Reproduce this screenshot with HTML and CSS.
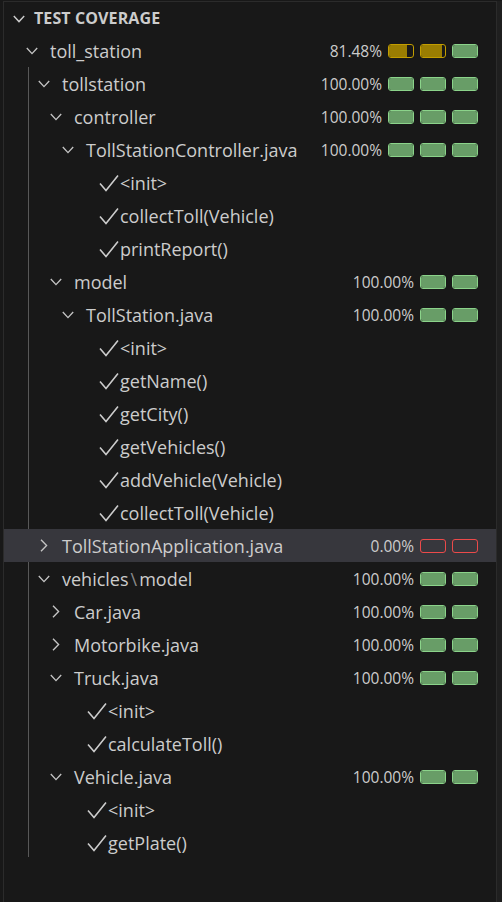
FILE: index.html
```html
<!DOCTYPE html>
<html>
<head>
<meta charset="utf-8">
<link rel="stylesheet" href="styles.css">
</head>
<body>
<div class="frame">
  <div class="panel">
    <div class="header">
      <svg class="hchev" width="12" height="8" viewBox="0 0 12 8"><polyline points="0.8,1 6,6.6 11.2,1" fill="none" stroke="#cccccc" stroke-width="1.4"/></svg>
      <span class="title">TEST COVERAGE</span>
    </div>
    <div class="tree">
      <div class="row d0"><span class="tw"><svg class="cd" width="12" height="8" viewBox="0 0 12 8"><polyline points="0.8,1 6,6.6 11.2,1"/></svg></span><span class="label">toll_station</span><span class="pct">81.48%</span><span class="bars"><span class="bar warn"><span class="fill" style="width:76%"></span></span><span class="bar warn"><span class="fill" style="width:89%"></span></span><span class="bar ok"><span class="fill full"></span></span></span></div>
      <div class="group">
        <div class="row d1"><span class="tw"><svg class="cd" width="12" height="8" viewBox="0 0 12 8"><polyline points="0.8,1 6,6.6 11.2,1"/></svg></span><span class="label">tollstation</span><span class="pct">100.00%</span><span class="bars"><span class="bar ok"><span class="fill full"></span></span><span class="bar ok"><span class="fill full"></span></span><span class="bar ok"><span class="fill full"></span></span></span></div>
        <div class="row d2"><span class="tw"><svg class="cd" width="12" height="8" viewBox="0 0 12 8"><polyline points="0.8,1 6,6.6 11.2,1"/></svg></span><span class="label">controller</span><span class="pct">100.00%</span><span class="bars"><span class="bar ok"><span class="fill full"></span></span><span class="bar ok"><span class="fill full"></span></span><span class="bar ok"><span class="fill full"></span></span></span></div>
        <div class="row d3"><span class="tw"><svg class="cd" width="12" height="8" viewBox="0 0 12 8"><polyline points="0.8,1 6,6.6 11.2,1"/></svg></span><span class="label">TollStationController.java</span><span class="pct">100.00%</span><span class="bars"><span class="bar ok"><span class="fill full"></span></span><span class="bar ok"><span class="fill full"></span></span><span class="bar ok"><span class="fill full"></span></span></span></div>
        <div class="row d4"><span class="tw"></span><span class="ck"><svg width="20" height="18" viewBox="0 0 20 18"><polyline points="1,9.5 7,16.5 19,1.5"/></svg></span><span class="label">&lt;init&gt;</span></div>
        <div class="row d4"><span class="tw"></span><span class="ck"><svg width="20" height="18" viewBox="0 0 20 18"><polyline points="1,9.5 7,16.5 19,1.5"/></svg></span><span class="label">collectToll(Vehicle)</span></div>
        <div class="row d4"><span class="tw"></span><span class="ck"><svg width="20" height="18" viewBox="0 0 20 18"><polyline points="1,9.5 7,16.5 19,1.5"/></svg></span><span class="label">printReport()</span></div>
        <div class="row d2"><span class="tw"><svg class="cd" width="12" height="8" viewBox="0 0 12 8"><polyline points="0.8,1 6,6.6 11.2,1"/></svg></span><span class="label">model</span><span class="pct">100.00%</span><span class="bars"><span class="bar ok"><span class="fill full"></span></span><span class="bar ok"><span class="fill full"></span></span></span></div>
        <div class="row d3"><span class="tw"><svg class="cd" width="12" height="8" viewBox="0 0 12 8"><polyline points="0.8,1 6,6.6 11.2,1"/></svg></span><span class="label">TollStation.java</span><span class="pct">100.00%</span><span class="bars"><span class="bar ok"><span class="fill full"></span></span><span class="bar ok"><span class="fill full"></span></span></span></div>
        <div class="row d4"><span class="tw"></span><span class="ck"><svg width="20" height="18" viewBox="0 0 20 18"><polyline points="1,9.5 7,16.5 19,1.5"/></svg></span><span class="label">&lt;init&gt;</span></div>
        <div class="row d4"><span class="tw"></span><span class="ck"><svg width="20" height="18" viewBox="0 0 20 18"><polyline points="1,9.5 7,16.5 19,1.5"/></svg></span><span class="label">getName()</span></div>
        <div class="row d4"><span class="tw"></span><span class="ck"><svg width="20" height="18" viewBox="0 0 20 18"><polyline points="1,9.5 7,16.5 19,1.5"/></svg></span><span class="label">getCity()</span></div>
        <div class="row d4"><span class="tw"></span><span class="ck"><svg width="20" height="18" viewBox="0 0 20 18"><polyline points="1,9.5 7,16.5 19,1.5"/></svg></span><span class="label">getVehicles()</span></div>
        <div class="row d4"><span class="tw"></span><span class="ck"><svg width="20" height="18" viewBox="0 0 20 18"><polyline points="1,9.5 7,16.5 19,1.5"/></svg></span><span class="label">addVehicle(Vehicle)</span></div>
        <div class="row d4"><span class="tw"></span><span class="ck"><svg width="20" height="18" viewBox="0 0 20 18"><polyline points="1,9.5 7,16.5 19,1.5"/></svg></span><span class="label">collectToll(Vehicle)</span></div>
        <div class="row d1 selected"><span class="tw"><svg class="cr" width="8" height="13" viewBox="0 0 8 13"><polyline points="1,0.8 6.6,6.5 1,12.2"/></svg></span><span class="label">TollStationApplication.java</span><span class="pct">0.00%</span><span class="bars"><span class="bar bad"></span><span class="bar bad"></span></span></div>
        <div class="row d1"><span class="tw"><svg class="cd" width="12" height="8" viewBox="0 0 12 8"><polyline points="0.8,1 6,6.6 11.2,1"/></svg></span><span class="label">vehicles<span class="sep">\</span>model</span><span class="pct">100.00%</span><span class="bars"><span class="bar ok"><span class="fill full"></span></span><span class="bar ok"><span class="fill full"></span></span></span></div>
        <div class="row d2"><span class="tw"><svg class="cr" width="8" height="13" viewBox="0 0 8 13"><polyline points="1,0.8 6.6,6.5 1,12.2"/></svg></span><span class="label">Car.java</span><span class="pct">100.00%</span><span class="bars"><span class="bar ok"><span class="fill full"></span></span><span class="bar ok"><span class="fill full"></span></span></span></div>
        <div class="row d2"><span class="tw"><svg class="cr" width="8" height="13" viewBox="0 0 8 13"><polyline points="1,0.8 6.6,6.5 1,12.2"/></svg></span><span class="label">Motorbike.java</span><span class="pct">100.00%</span><span class="bars"><span class="bar ok"><span class="fill full"></span></span><span class="bar ok"><span class="fill full"></span></span></span></div>
        <div class="row d2"><span class="tw"><svg class="cd" width="12" height="8" viewBox="0 0 12 8"><polyline points="0.8,1 6,6.6 11.2,1"/></svg></span><span class="label">Truck.java</span><span class="pct">100.00%</span><span class="bars"><span class="bar ok"><span class="fill full"></span></span><span class="bar ok"><span class="fill full"></span></span></span></div>
        <div class="row d3"><span class="tw"></span><span class="ck"><svg width="20" height="18" viewBox="0 0 20 18"><polyline points="1,9.5 7,16.5 19,1.5"/></svg></span><span class="label">&lt;init&gt;</span></div>
        <div class="row d3"><span class="tw"></span><span class="ck"><svg width="20" height="18" viewBox="0 0 20 18"><polyline points="1,9.5 7,16.5 19,1.5"/></svg></span><span class="label">calculateToll()</span></div>
        <div class="row d2"><span class="tw"><svg class="cd" width="12" height="8" viewBox="0 0 12 8"><polyline points="0.8,1 6,6.6 11.2,1"/></svg></span><span class="label">Vehicle.java</span><span class="pct">100.00%</span><span class="bars"><span class="bar ok"><span class="fill full"></span></span><span class="bar ok"><span class="fill full"></span></span></span></div>
        <div class="row d3"><span class="tw"></span><span class="ck"><svg width="20" height="18" viewBox="0 0 20 18"><polyline points="1,9.5 7,16.5 19,1.5"/></svg></span><span class="label">&lt;init&gt;</span></div>
        <div class="row d3"><span class="tw"></span><span class="ck"><svg width="20" height="18" viewBox="0 0 20 18"><polyline points="1,9.5 7,16.5 19,1.5"/></svg></span><span class="label">getPlate()</span></div>
      </div>
    </div>
  </div>
  <div class="sash"></div>
</div>
</body>
</html>
```
FILE: styles.css
```css
html, body {
  margin: 0;
  padding: 0;
  background: #181818;
  width: 502px;
  height: 902px;
  overflow: hidden;
}
body {
  font-family: "Open Sans", "Noto Sans", sans-serif;
  color: #cccccc;
}
.frame {
  display: flex;
  height: 902px;
  padding-left: 3px;
  padding-top: 1px;
  box-sizing: border-box;
}
.panel {
  flex: 1;
  border-left: 1px solid #2b2b2b;
  border-top: 1px solid #2b2b2b;
  background: #181818;
}
.sash {
  width: 5px;
  background: #1f1f1f;
  border-left: 1px solid #2b2b2b;
}
.header {
  height: 32px;
  display: flex;
  align-items: center;
  padding-left: 9px;
}
.hchev {
  width: 12px;
  height: 8px;
  margin-right: 9px;
  margin-top: 1px;
}
.title {
  font-weight: 700;
  font-size: 16px;
  letter-spacing: 0.1px;
  color: #cccccc;
}
.tree {
  position: relative;
}
.group {
  position: relative;
}
.group::before {
  content: "";
  position: absolute;
  left: 24px;
  top: 0;
  bottom: 2px;
  width: 1px;
  background: #585858;
}
.row {
  height: 33px;
  display: flex;
  align-items: center;
  padding-right: 18px;
  white-space: nowrap;
  position: relative;
}
.row.selected {
  background: #37373d;
}
.d0 { padding-left: 16px; }
.d1 { padding-left: 28px; }
.d2 { padding-left: 40px; }
.d3 { padding-left: 52px; }
.d4 { padding-left: 64px; }
.tw {
  width: 30px;
  flex: none;
  display: flex;
  align-items: center;
  justify-content: center;
  padding-right: 6px;
  box-sizing: border-box;
}
.tw svg polyline {
  fill: none;
  stroke: #c5c5c5;
  stroke-width: 1.35;
}
.ck {
  width: 22px;
  flex: none;
  display: flex;
  align-items: center;
  padding-left: 1px;
  box-sizing: border-box;
}
.ck svg polyline {
  fill: none;
  stroke: #cccccc;
  stroke-width: 1.6;
}
.label {
  font-size: 18px;
  color: #cccccc;
  flex: 1;
  min-width: 0;
}
.sep {
  color: #8a8a8a;
  margin: 0 2px;
}
.pct {
  font-size: 15.5px;
  color: #cccccc;
  margin-right: 6px;
}
.bars {
  display: flex;
  gap: 6px;
}
.bar {
  width: 26px;
  height: 14px;
  border: 1px solid;
  border-radius: 3px;
  box-sizing: border-box;
  overflow: hidden;
  background: #181818;
  display: flex;
}
.fill {
  height: 100%;
}
.fill.full { width: 100%; }
.bar.ok { border-color: #8bd38a; }
.bar.ok .fill { background: #689d67; }
.bar.warn { border-color: #c29d00; }
.bar.warn .fill { background: #9a7d02; }
.bar.bad { border-color: #ec4a4a; background: transparent; }
```
